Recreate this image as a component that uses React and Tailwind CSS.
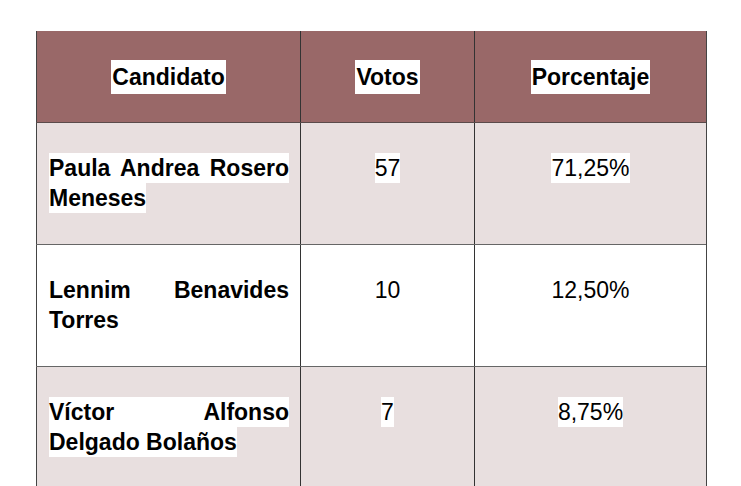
import React from 'react';

const rows = [
  { name: 'Paula Andrea Rosero Meneses', votes: '57', pct: '71,25%', shade: true },
  { name: 'Lennim Benavides Torres', votes: '10', pct: '12,50%', shade: false },
  { name: 'Víctor Alfonso Delgado Bolaños', votes: '7', pct: '8,75%', shade: true },
];

const Mark = ({ children, className = '' }) => (
  <span className={`bg-white py-[2px] box-decoration-clone ${className}`}>{children}</span>
);

const App = () => {
  return (
    <div
      className="w-[741px] h-[486px] overflow-hidden bg-white pt-[31px] pl-[36px] text-black"
      style={{ fontFamily: '"Liberation Sans", Arial, sans-serif' }}
    >
      <div className="w-[671px] border-r border-[#444]">
        {/* header */}
        <div className="grid grid-cols-[264px_174px_232px] h-[92px] bg-[#996868] border-b border-[#5a4a4a] text-[23px] leading-[30px] font-bold">
          <div className="border-l border-[#444] flex items-center justify-center">
            <Mark className="px-[1px]">Candidato</Mark>
          </div>
          <div className="border-l border-[#333] flex items-center justify-center">
            <Mark className="px-[1px]">Votos</Mark>
          </div>
          <div className="border-l border-[#333] flex items-center justify-center">
            <Mark className="px-[1px]">Porcentaje</Mark>
          </div>
        </div>

        {rows.map((row) => (
          <div
            key={row.name}
            className={`grid grid-cols-[264px_174px_232px] h-[122px] border-b border-[#666] text-[23px] leading-[30px] ${
              row.shade ? 'bg-[#e8dfdf]' : 'bg-white'
            }`}
          >
            <div className="border-l border-[#444] pt-[30px] pl-[12px] pr-[11px]">
              <p className="font-bold text-justify">
                <Mark>{row.name}</Mark>
              </p>
            </div>
            <div className="border-l border-[#333] pt-[30px] text-center">
              <Mark>{row.votes}</Mark>
            </div>
            <div className="border-l border-[#333] pt-[30px] text-center">
              <Mark>{row.pct}</Mark>
            </div>
          </div>
        ))}
      </div>
    </div>
  );
};

export default App;
